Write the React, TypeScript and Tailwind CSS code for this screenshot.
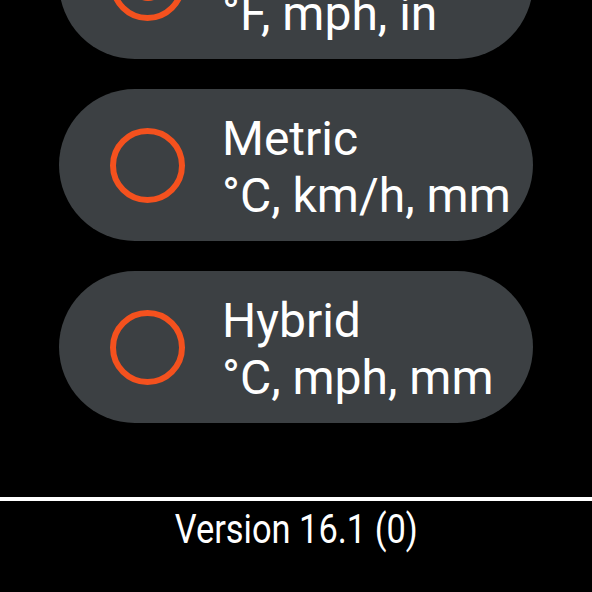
import React from 'react'

type Option = {
  title: string
  units: string
  selected?: boolean
}

const options: Option[] = [
  { title: 'Imperial', units: '°F, mph, in', selected: true },
  { title: 'Metric', units: '°C, km/h, mm' },
  { title: 'Hybrid', units: '°C, mph, mm' },
]

function Radio({ selected }: { selected?: boolean }) {
  return (
    <div className="flex h-[75px] w-[75px] shrink-0 items-center justify-center rounded-full border-[6px] border-[#f4511e]">
      {selected && <div className="h-[36px] w-[36px] rounded-full bg-[#f4511e]" />}
    </div>
  )
}

export default function App() {
  return (
    <div
      className="relative h-[592px] w-[592px] overflow-hidden bg-black text-white"
      style={{ fontFamily: 'Roboto, "Noto Sans", sans-serif' }}
    >
      {/* Unit options (list scrolled) */}
      <div className="mt-[-93px] flex flex-col items-center gap-[30px]">
        {options.map((opt) => (
          <div
            key={opt.title}
            className="flex h-[152px] w-[474px] items-center rounded-full bg-[#3c4043] pl-[51px]"
          >
            <Radio selected={opt.selected} />
            <div className="ml-[37px] flex flex-col pt-[3px] text-[48px] leading-[57px]">
              <span>{opt.title}</span>
              <span className="whitespace-nowrap">{opt.units}</span>
            </div>
          </div>
        ))}
      </div>

      {/* Footer */}
      <div className="mt-[74px] h-[4px] w-full bg-white" />
      <div className="flex justify-center pt-[5px]">
        <span className="inline-block origin-center scale-x-[0.86] whitespace-nowrap text-[40px] leading-[48px]">
          Version 16.1 (0)
        </span>
      </div>
    </div>
  )
}
